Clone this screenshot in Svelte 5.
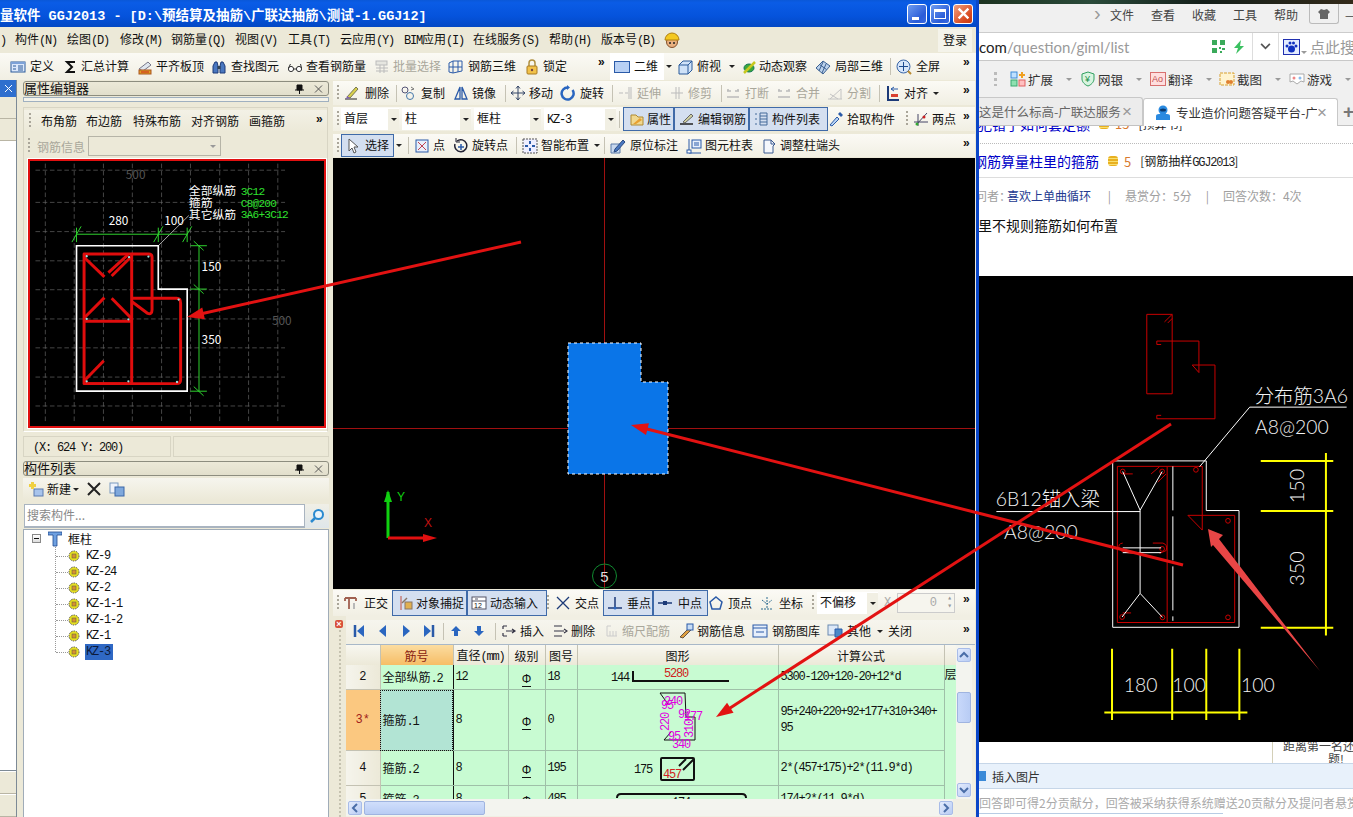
<script>
  // 工具栏用页面 x 坐标写数据，宽度由下一项推出
  const I = (x, i, tx, t, f = '', ix = x) => ({ x, i, tx, t, f, ix });
  const M = (x, k, t = '') => ({ x, k, t });

  function lay(origin, end, items) {
    const out = items.map((it, n) => ({ ...it, w: (n + 1 < items.length ? items[n + 1].x : end) - it.x }));
    return { lead: items[0].x - origin, items: out };
  }

  function runs(s) {
    return (s.match(/[\x20-\x7e]+|[^\x20-\x7e]+/g) || []).map((p) => ({ p, latin: /^[\x20-\x7e]/.test(p) }));
  }

  const menu = lay(0, 976, [
    [0, ')'], [15, '构件(N)'], [67, '绘图(D)'], [120, '修改(M)'], [171, '钢筋量(Q)'], [235, '视图(V)'], [288, '工具(T)'],
    [340, '云应用(Y)'], [404, 'BIM应用(I)'], [473, '在线服务(S)'], [549, '帮助(H)'], [601, '版本号(B)']
  ].map(([x, t]) => M(x, 'text', t)));

  const top1 = lay(0, 976, [
    I(10, 'def', 30, '定义'), I(63, 'sigma', 81, '汇总计算'), I(137, 'level', 156, '平齐板顶'), I(211, 'binoc', 231, '查找图元'),
    I(287, 'glass', 306, '查看钢筋量'), I(374, 'batch', 393, '批量选择', 'off'), I(448, 'r3d', 468, '钢筋三维'), I(524, 'lock', 543, '锁定'),
    M(597, 'more'), M(610, 'combo2', '二维'), M(664, 'drop'), I(677, 'cube', 697, '俯视'), M(727, 'drop'), I(741, 'orbit', 759, '动态观察'),
    I(815, 'local', 835, '局部三维'), M(890, 'sep'), I(896, 'zoom', 916, '全屏'), M(962, 'more')
  ]);

  const rowA = lay(333, 975, [
    M(337, 'grip'), I(343, 'erase', 365, '删除'), M(396, 'sep'), I(400, 'copy', 421, '复制'), I(453, 'mirror', 472, '镜像'), M(505, 'sep'),
    I(510, 'move', 529, '移动'), I(560, 'rotate', 580, '旋转'), M(612, 'sep'), I(618, 'extend', 637, '延伸', 'off'), I(669, 'trim', 688, '修剪', 'off'),
    M(721, 'sep'), I(725, 'brk', 745, '打断', 'off'), I(776, 'brk', 796, '合并', 'off'), I(827, 'split', 847, '分割', 'off'), M(879, 'sep'),
    I(885, 'align', 904, '对齐'), M(931, 'drop'), M(962, 'more')
  ]);

  const rowB = lay(333, 975, [
    M(337, 'grip'), M(341, 'combo', '首层'), M(402, 'combo', '柱'), M(474, 'combo', '框柱'), M(544, 'combo', 'KZ-3'), M(619, 'sep'),
    I(623, 'attr', 646, '属性', 'on', 628), I(674, 'edit', 697, '编辑钢筋', 'on', 678), I(749, 'list', 771, '构件列表', 'on', 752),
    I(828, 'pick', 847, '拾取构件'), M(906, 'grip'), I(913, 'two', 932, '两点'), M(962, 'more')
  ]);

  const rowC = lay(333, 975, [
    M(337, 'grip'), I(341, 'arrow', 364, '选择', 'on', 345), M(394, 'drop'), M(408, 'sep'), I(414, 'pt', 433, '点'), I(452, 'rotpt', 472, '旋转点'),
    M(516, 'sep'), I(522, 'smart', 541, '智能布置'), M(592, 'drop'), M(604, 'sep'), I(610, 'mark', 630, '原位标注'), I(686, 'tbl', 705, '图元柱表'),
    I(762, 'head', 780, '调整柱端头'), M(962, 'more')
  ]);

  const rowD = lay(333, 975, [
    M(337, 'grip'), I(343, 'ortho', 364, '正交'), I(392, 'snap', 415, '对象捕捉', 'on', 397), I(467, 'dyn', 489, '动态输入', 'on', 470), M(547, 'grip'),
    I(555, 'cross', 575, '交点'), I(603, 'perp', 626, '垂点', 'on', 606), I(653, 'mid', 677, '中点', 'on', 656), I(708, 'vert', 728, '顶点'),
    I(759, 'coord', 779, '坐标'), M(812, 'grip'), M(817, 'combo', '不偏移'), M(881, 'xlab'), M(897, 'spin'), M(962, 'more')
  ]);

  const rowE = lay(346, 975, [
    I(351, 'first', 0, ''), I(375, 'prev', 0, ''), I(398, 'next', 0, ''), I(421, 'last', 0, ''), M(443, 'sep'), I(448, 'up', 0, ''), I(471, 'down', 0, ''), M(495, 'sep'),
    I(501, 'ins', 520, '插入'), I(552, 'del', 571, '删除'), I(604, 'scale', 622, '缩尺配筋', 'off'), I(678, 'info', 697, '钢筋信息'), I(752, 'lib', 772, '钢筋图库'),
    I(827, 'other', 847, '其他'), M(875, 'drop'), M(888, 'text', '关闭'), M(962, 'more')
  ]);

  const bar1 = lay(23, 328, [
    M(28, 'grip'), M(40, 'text', '布角筋'), M(85, 'text', '布边筋'), M(132, 'text', '特殊布筋'), M(190, 'text', '对齐钢筋'), M(248, 'text', '画箍筋'), M(314, 'more')
  ]);

  const s = 'stroke', blue = '#2a5aa8';
  const icons = {
    def: `<rect x="1" y="3" width="14" height="10" fill="#dce8fb" ${s}="#2a5a9a"/><rect x="1" y="3" width="14" height="2" fill="#7da2d8"/><path d="M3 7h3M3 10h3M8 7h5M8 9h5M8 11h5" ${s}="#2a5a9a"/>`,
    sigma: `<path d="M12 3H4l5 5-5 5h8" fill="none" ${s}="#111" stroke-width="2"/>`,
    level: `<path d="M2 10l9-7 3 3-8 6z" fill="#dfe6ee" ${s}="#778"/><rect x="2" y="11" width="12" height="4" fill="#e0a020" ${s}="#a52"/><path d="M4 13h8" ${s}="#c22"/>`,
    binoc: `<path d="M2 14V7l2-4h2l1 4v7zM9 14V7l1-4h2l2 4v7z" fill="#4a78c0" ${s}="#1c3a78"/><rect x="6.5" y="7" width="3" height="3" fill="#345"/>`,
    glass: `<circle cx="4" cy="10" r="2.6" fill="#fff" ${s}="#333"/><circle cx="12" cy="10" r="2.6" fill="#fff" ${s}="#333"/><path d="M6.5 10h3M1.5 9l2-4M14.500 9l-1-4" ${s}="#333" fill="none"/>`,
    batch: `<rect x="2" y="2" width="11" height="4" fill="#e6e6e0" ${s}="#bbb"/><path d="M2 9h12M2 12h12M6 6v8M10 6v8" ${s}="#bbb"/>`,
    r3d: `<path d="M1 4l4-2v12l-4-1zM5 2h9v10l-9 2M10 2v11M1 8h13" fill="none" ${s}="${blue}"/>`,
    lock: `<path d="M5 7V4a3 3 0 016 0v3" fill="none" ${s}="#b09040" stroke-width="1.500"/><rect x="3" y="7" width="10" height="8" rx="1" fill="#f2c24a" ${s}="#a87a20"/><circle cx="8" cy="11" r="1.200" fill="#744"/>`,
    cube: `<path d="M2 6l4-4h9v9l-4 4H2z" fill="#cfe2f8" ${s}="#2a5a9a"/><path d="M2 6h9v9M11 6l4-4" fill="none" ${s}="#2a5a9a"/>`,
    orbit: `<ellipse cx="8" cy="9" rx="5" ry="4" fill="#3da83a" ${s}="#175"/><path d="M3 14L14 3" ${s}="#c8c820" stroke-width="2.500"/>`,
    local: `<path d="M1 9l7-7 7 5-7 8z" fill="#bcd2ec" ${s}="#3a5f90"/><path d="M4.500 5.500l7 5M8 3l-4 9M11 5l-4 9" ${s}="#3a5f90"/>`,
    zoom: `<circle cx="7.500" cy="7.500" r="6.500" fill="#d7e6fa" ${s}="#3a66a8"/><path d="M7.500 3v9M3 7.500h9" ${s}="#1c4a90"/><path d="M12 12l3 3" ${s}="#b98a30" stroke-width="2"/>`,
    erase: `<path d="M2 14h12" ${s}="#222"/><path d="M4 12L13 2l2 2-8 9z" fill="#d8d04a" ${s}="#775"/><path d="M3 14l1-3 3 2z" fill="#8060b0"/>`,
    copy: `<circle cx="5" cy="5" r="3" fill="none" ${s}="#557"/><circle cx="10" cy="11" r="3.500" fill="none" ${s}="#47a"/><path d="M11 2l3 2-3 1" fill="none" ${s}="#777"/>`,
    mirror: `<path d="M7 2L2 14h5zM9 2l5 12H9z" fill="none" ${s}="#2a5aa8" stroke-width="1.300"/>`,
    move: `<path d="M8 1v14M1 8h14M8 1L6 3.500M8 1l2 2.500M8 15l-2-2.500M8 15l2-2.500M1 8l2.500-2M1 8l2.500 2M15 8l-2.500-2M15 8l-2.500 2" fill="none" ${s}="#346"/>`,
    rotate: `<path d="M12.500 5A6 6 0 118 2.500" fill="none" ${s}="#2a66c0" stroke-width="2.500"/><path d="M7 0l3 2.500L7 5z" fill="#2a66c0"/>`,
    extend: `<path d="M1 8h4M7 8h3M13 2v12M11 2v12" fill="none" ${s}="#bbb"/>`,
    trim: `<path d="M2 8h12M7 2v12M10 2v12" fill="none" ${s}="#bbb"/>`,
    brk: `<path d="M2 6h4M10 6h4M2 12h12M3 4v2M13 4v2" fill="none" ${s}="#bbb" stroke-width="1.500"/>`,
    split: `<path d="M1 14h14M3 14L14 4M3 9l8 5M14 4v10" fill="none" ${s}="#c4c4c4"/>`,
    align: `<path d="M3 1v14h11" fill="none" ${s}="#1c3a78" stroke-width="2"/><rect x="6" y="9" width="7" height="3" fill="#d84030"/><path d="M13 4H6M9 2L6 4l3 2" fill="none" ${s}="#2a5aa8"/>`,
    attr: `<path d="M2 4h5l2 2h5v8H2z" fill="#f0d890" ${s}="#b08a30"/><path d="M4 13l7-6 2 2-6 4z" fill="#e8a030"/>`,
    edit: `<path d="M1 13h13" ${s}="#222" stroke-width="1.500"/><path d="M4 11l8-8 2 2-8 7z" fill="#d0d0a0" ${s}="#666"/>`,
    list: `<path d="M2 3h2M2 8h2M2 13h2M7 2h7v12H7zM7 5h7M7 8h7M7 11h7" fill="none" ${s}="#446a9a"/>`,
    pick: `<path d="M2 14l7-8 2 2-7 7z" fill="#b8d4f4" ${s}="#2a5aa8"/><path d="M10 3l3 3 2-2-3-3z" fill="#2a5aa8"/>`,
    two: `<path d="M1 11h14M3 14L14 2M5 3v12" fill="none" ${s}="#446"/><circle cx="11" cy="6" r="1.500" fill="#c22"/><circle cx="4" cy="13" r="1.500" fill="#3a3"/>`,
    arrow: `<path d="M3 1v12l3-3 2 5 2-1-2-5h4z" fill="#fff" ${s}="#555"/>`,
    pt: `<rect x="2" y="2" width="12" height="12" fill="#e8eefa" ${s}="#2a5aa8"/><path d="M4 4l8 8M12 4l-8 8" ${s}="#c04050"/>`,
    rotpt: `<path d="M3 6a6 6 0 102-3" fill="none" ${s}="#223" stroke-width="1.500"/><path d="M4 0v4h4" fill="none" ${s}="#223"/><path d="M9 6v6M6 9h6" ${s}="#2a5aa8" stroke-width="1.500"/>`,
    smart: `<rect x="1" y="1" width="14" height="14" fill="#eef" ${s}="#555" stroke-dasharray="2 1"/><path d="M8 3v3M8 10v3M3 8h3M10 8h3" ${s}="#2a5aa8" stroke-width="2"/>`,
    mark: `<path d="M1 6h9v9H1z" fill="#c8d8ee" ${s}="#5a7aa8"/><path d="M5 11L13 2l2 2-8 9-3 1z" fill="#4a78c0" ${s}="#2a4a80"/>`,
    tbl: `<path d="M3 1v14h12" fill="none" ${s}="#2a5aa8"/><rect x="6" y="2" width="9" height="8" fill="#e8f0fc" ${s}="#2a5aa8"/><path d="M8 5h5M8 7h5" ${s}="#2a5aa8"/><rect x="1" y="12" width="4" height="3" fill="#fff" ${s}="#2a5aa8"/>`,
    head: `<path d="M2 2h7l4 4-2 2v7H2z" fill="#f4f7fc" ${s}="#3a5a90"/><path d="M9 2v4h4" fill="none" ${s}="#3a5a90"/>`,
    ortho: `<path d="M2 3h11M6 3v11M2 3v3M13 3v3" fill="none" ${s}="#a06050" stroke-width="1.800"/><path d="M11 8v6" ${s}="#b8b8b8" stroke-width="2"/>`,
    snap: `<path d="M3 1v14" ${s}="#c05040"/><rect x="7" y="7" width="7" height="7" fill="#e0b050" ${s}="#876"/><path d="M4 8l5-5" ${s}="#876" stroke-width="1.500"/>`,
    dyn: `<rect x="1" y="2" width="14" height="12" fill="#fff" ${s}="#556"/><path d="M1 6h14M4 4h3" ${s}="#556"/><text x="3" y="13" font-size="7" font-family="Liberation Sans" fill="#111">12</text>`,
    cross: `<path d="M2 2l12 12M14 2L2 14" ${s}="#1c3a78" stroke-width="1.300"/>`,
    perp: `<path d="M1 13h14M8 2v11" ${s}="#1c3a78" stroke-width="1.500"/><circle cx="8" cy="13" r="1.500" fill="#2a66c0"/>`,
    mid: `<path d="M1 8h14" ${s}="#1c3a78" stroke-width="1.500"/><rect x="6" y="6" width="4" height="4" fill="#1c3a78"/>`,
    vert: `<path d="M8 2l6 5-2 7H4L2 7z" fill="none" ${s}="#2a5aa8" stroke-width="1.500"/>`,
    coord: `<path d="M8 2v12M2 14h12M3 5l5 4 5-4" fill="none" ${s}="#2a6a90" stroke-dasharray="2 1"/>`,
    first: `<path d="M4 2v12" ${s}="#2a5aa8" stroke-width="2.500"/><path d="M13 2v12L6 8z" fill="#2a66c0"/>`,
    prev: `<path d="M11 2v12L4 8z" fill="#2a66c0"/>`,
    next: `<path d="M5 2v12l7-6z" fill="#2a66c0"/>`,
    last: `<path d="M12 2v12" ${s}="#2a5aa8" stroke-width="2.500"/><path d="M3 2v12l7-6z" fill="#2a66c0"/>`,
    up: `<path d="M8 3l5 5h-3v5H6V8H3z" fill="#2a66c0"/>`,
    down: `<path d="M8 13l5-5h-3V3H6v5H3z" fill="#2a66c0"/>`,
    ins: `<path d="M2 3h4M2 13h4M2 3v3M2 10v3M5 8h9M11 6l3 2-3 2" fill="none" ${s}="#334" stroke-width="1.200"/>`,
    del: `<path d="M2 3h8M2 8h10M2 13h8M12 6l3 2-3 2" fill="none" ${s}="#334" stroke-width="1.200"/>`,
    scale: `<path d="M3 3h4M3 3v10h10" fill="none" ${s}="#ccc"/><path d="M6 13v-5M9 13v-5M12 13v-5" ${s}="#ccc"/>`,
    info: `<path d="M2 14L11 5l2 2-8 8z" fill="#e0a040" ${s}="#654"/><rect x="9" y="1" width="6" height="6" fill="#c8dcf4" ${s}="#2a5aa8"/>`,
    lib: `<rect x="1" y="2" width="14" height="12" fill="#e6effb" ${s}="#2a5aa8"/><path d="M1 5h14M4 9h8" ${s}="#2a5aa8"/>`,
    other: `<rect x="1" y="2" width="10" height="10" fill="#dce8f8" ${s}="#6a8ab0"/><path d="M8 6h7v8H8z" fill="#4a88c8" ${s}="#2a5aa8"/>`
  };

  const gridX = [70, 158, 247, 335, 424, 512, 601, 689, 778];
  const gridY = [40, 138, 227, 316, 404, 493, 581, 670, 758];
  const rebar = [
    'M188,295 H333 V690 H188 Z',
    'M333,295 H385 Q395,295 395,305 V465 Q395,482 380,475 L333,440',
    'M333,430 H470 Q482,430 482,445 V678 Q482,690 470,690 H188',
    'M188,500 H333',
    'M188,305 L250,365', 'M188,490 L250,428', 'M272,362 L330,305', 'M262,352 L322,297', 'M272,430 L333,492', 'M188,682 L248,620'
  ];
  const dots = [[196, 302], [325, 305], [384, 303], [476, 434], [196, 493], [323, 494], [196, 683], [323, 683], [471, 685]];
  const greenTicks = [[165, 235], [414, 235], [502, 235]];
  const greenH = [270, 402, 713];

  const tree = ['KZ-9', 'KZ-24', 'KZ-2', 'KZ-1-1', 'KZ-1-2', 'KZ-1', 'KZ-3'];

  const cols = [34, 73, 55, 37, 32, 201, 166, 12];
  const heads = ['', '筋号', '直径(mm)', '级别', '图号', '图形', '计算公式', ''];
  const rows = [
    { n: '2', name: '全部纵筋.2', d: '12', no: '18', f: '5300-120+120-20+12*d', h: 24, extra: '层', shape: 'a' },
    { n: '3*', name: '箍筋.1', d: '8', no: '0', f: '95+240+220+92+177+310+340+ 95', h: 60, sel: true, shape: 'b' },
    { n: '4', name: '箍筋.2', d: '8', no: '195', f: '2*(457+175)+2*(11.9*d)', h: 34, shape: 'c' },
    { n: '5', name: '箍筋.3', d: '8', no: '485', f: '174+2*(11.9*d)', h: 26, shape: 'd' }
  ];

  const bTools = [
    { x: 1010, tx: 1027, t: '扩展', i: 'ext', dx: 1065 },
    { x: 1080, tx: 1098, t: '网银', i: 'bank', dx: 1135 },
    { x: 1150, tx: 1168, t: '翻译', i: 'trans', dx: 1205 },
    { x: 1219, tx: 1238, t: '截图', i: 'shot', dx: 1275 },
    { x: 1289, tx: 1307, t: '游戏', i: 'game', dx: 1345 }
  ];
  const bIcons = {
    ext: '<rect x="1" y="1" width="6" height="6" fill="#bfe0ff" stroke="#3a8ad8"/><rect x="1" y="9" width="6" height="6" fill="#8fe0b0" stroke="#3aa870"/><rect x="9" y="9" width="6" height="6" fill="#ffc0c0" stroke="#e06060"/><path d="M12 1v6M9 4h6" stroke="#f0a020" stroke-width="2"/>',
    bank: '<path d="M8 1l6 2v5c0 3-3 6-6 7-3-1-6-4-6-7V3z" fill="#d8f4e0" stroke="#30a060"/><text x="5" y="11" font-size="9" font-family="Liberation Sans" fill="#20904a">¥</text>',
    trans: '<rect x="0.500" y="1.500" width="15" height="13" fill="#ffdede" stroke="#d87070"/><text x="2" y="11" font-size="9" font-family="Liberation Sans" fill="#c05050">Ao</text>',
    shot: '<rect x="1" y="2" width="14" height="12" fill="#fff4d0" stroke="#d8a030" stroke-dasharray="3 1"/><circle cx="9" cy="11" r="2" fill="#e08030"/><circle cx="12" cy="11" r="2" fill="#e08030"/>',
    game: '<path d="M1 3h14v8l-3-1-4 3-4-3-3 1z" fill="#fff" stroke="#aaa"/><circle cx="5" cy="7" r="1.500" fill="#e88"/><circle cx="11" cy="7" r="1.500" fill="#8be"/>'
  };

  // 箭头头部：按方向算三角形
  function head(x1, y1, x2, y2, len, wid) {
    const d = Math.hypot(x2 - x1, y2 - y1);
    const ux = (x2 - x1) / d, uy = (y2 - y1) / d;
    const bx = x2 - ux * len, by = y2 - uy * len;
    return `${x2},${y2} ${bx - uy * wid},${by + ux * wid} ${bx + uy * wid},${by - ux * wid}`;
  }
  const arrows = [
    [521, 242, 187, 317],
    [1183, 565, 631, 425],
    [1171, 424, 716, 717]
  ];
</script>

{#snippet txt(str)}
  {#each runs(str) as r}<span class:m={r.latin}>{r.p}</span>{/each}
{/snippet}

{#snippet icon(name)}
  <svg class="ic" viewBox="0 0 16 16">{@html icons[name]}</svg>
{/snippet}

{#snippet bar(row, cls)}
  <div class="tb {cls}">
    {#if row.lead > 0}<div class="sp" style="width:{row.lead}px"></div>{/if}
    {#each row.items as it}
      {#if it.k === 'grip'}
        <div class="it" style="width:{it.w}px"><i class="grip"></i></div>
      {:else if it.k === 'sep'}
        <div class="it" style="width:{it.w}px"><i class="sep"></i></div>
      {:else if it.k === 'more'}
        <div class="it more" style="width:{it.w}px">»</div>
      {:else if it.k === 'drop'}
        <div class="it" style="width:{it.w}px"><i class="tri"></i></div>
      {:else if it.k === 'text'}
        <div class="it" style="width:{it.w}px">{@render txt(it.t)}</div>
      {:else if it.k === 'combo'}
        <div class="it" style="width:{it.w}px">
          <div class="combo">{@render txt(it.t)}<b class="cbtn"><i class="tri"></i></b></div>
        </div>
      {:else if it.k === 'combo2'}
        <div class="it two-d" style="width:{it.w}px">
          <svg class="ic wide" viewBox="0 0 16 12"><rect x="0.500" y="0.500" width="15" height="11" fill="#b8d0f4" stroke="#2a5aa8" /></svg>
          <span class="lab">{it.t}</span>
        </div>
      {:else if it.k === 'xlab'}
        <div class="it xlab" style="width:{it.w}px">X</div>
      {:else if it.k === 'spin'}
        <div class="it" style="width:{it.w}px"><div class="spin">0<b>▴<br />▾</b></div></div>
      {:else}
        <div class="it" class:off={it.f === 'off'} class:on={it.f === 'on'} style="width:{it.w}px">
          <span class="pad" style="width:{it.ix - it.x}px"></span>
          {@render icon(it.i)}
          {#if it.t}<span class="pad" style="width:{it.tx - it.ix - 16}px"></span><span class="lab">{it.t}</span>{/if}
        </div>
      {/if}
    {/each}
  </div>
{/snippet}

{#snippet paneHead(title)}
  <div class="phead">
    <span>{title}</span>
    <svg class="pin" viewBox="0 0 9 10"><path d="M2 1h5v5H2zM0 6h9M4.500 6v4" fill="#111" stroke="#111" /></svg>
    <svg class="pin" viewBox="0 0 9 9"><path d="M1 1l7 7M8 1L1 8" stroke="#555" /></svg>
  </div>
{/snippet}

<div class="app">
  <div class="win">
    <div class="title">
      <span class="ttl">量软件 GGJ2013 - [D:\预结算及抽筋\广联达抽筋\测试-1.GGJ12]</span>
      <div class="wbtns">
        <div class="wb"><i class="wmin"></i></div>
        <div class="wb"><i class="wmax"></i></div>
        <div class="wb close">
          <svg viewBox="0 0 12 12" width="13" height="13"><path d="M1.500 1.500l9 9M10.500 1.500l-9 9" stroke="#fff" stroke-width="2.200" /></svg>
        </div>
      </div>
    </div>

    <div class="menu">
      {#each menu.items as it}
        <div class="mi" style="width:{it.w}px">{@render txt(it.t)}</div>
      {/each}
      <svg class="helmet" viewBox="0 0 16 16">
        <circle cx="8" cy="10" r="5.500" fill="#e8b080" stroke="#85502a" />
        <path d="M1 8a7 7 0 0114 0z" fill="#f4c820" stroke="#b08010" />
        <circle cx="6" cy="11" r="1" fill="#222" /><circle cx="10" cy="11" r="1" fill="#222" />
      </svg>
      <div class="login">登录</div>
    </div>

    {@render bar(top1, 'top1')}

    <div class="body">
      <div class="strip">
        <div class="shead">
          <svg viewBox="0 0 9 9" width="9" height="9"><path d="M1 1l7 7M8 1L1 8" stroke="#fff" /></svg>
        </div>
        <div class="scell"></div>
        <div class="scell"></div>
        <div class="swhite"></div>
        <div class="scell low"></div>
        <div class="scell low"></div>
      </div>

      <div class="left">
        {@render paneHead('属性编辑器')}
        <div class="thinbar"></div>
        <div class="group">
          {@render bar(bar1, 'inner')}
          <div class="inforow">
            <i class="grip"></i>
            <span class="dis">钢筋信息</span>
            <div class="discombo"><i class="tri gray"></i></div>
          </div>
          <svg class="sect" viewBox="24 12 894 807">
            {#each gridX as x}
              <line x1={x} y1="20" x2={x} y2="810" stroke="#6a6a6a" stroke-width="2" stroke-dasharray="14 8" />
            {/each}
            {#each gridY as y}
              <line x1="40" y1={y} x2="800" y2={y} stroke="#6a6a6a" stroke-width="2" stroke-dasharray="14 8" />
            {/each}
            <text class="ct dim" x="315" y="68">500</text>
            <text class="ct dim" x="760" y="512">500</text>

            <path d="M165,270 H414 V402 H502 V713 H165 Z" fill="none" stroke="#fff" stroke-width="5" />
            <line x1="414" y1="270" x2="507" y2="178" stroke="#fff" stroke-width="2" />

            <path d="M165,235 H502 M538,270 V713" stroke="#2fd32f" stroke-width="3" fill="none" />
            {#each greenTicks as [x, y]}
              <path d="M{x - 14},{y + 24} L{x + 14},{y - 24} M{x},{y - 20} V{y + 24}" stroke="#2fd32f" stroke-width="3" />
            {/each}
            {#each greenH as y}
              <path d="M512,{y} H562 M522,{y - 14} L552,{y + 14}" stroke="#2fd32f" stroke-width="3" />
            {/each}

            {#each rebar as d}
              <path {d} fill="none" stroke="#e00d0d" stroke-width="9" stroke-linejoin="round" />
            {/each}
            {#each dots as [x, y]}
              <circle cx={x} cy={y} r="3.500" fill="#9fe0e0" />
            {/each}

            <text class="ct" x="263" y="208">280</text>
            <text class="ct" x="432" y="208">100</text>
            <text class="ct" x="546" y="347">150</text>
            <text class="ct" x="546" y="569">350</text>
            <text class="ct" x="507" y="116">全部纵筋</text>
            <text class="ct" x="507" y="152">箍筋</text>
            <text class="ct" x="507" y="188">其它纵筋</text>
            <text class="ct grn" x="665" y="115">3C12</text>
            <text class="ct grn" x="665" y="151">C8@200</text>
            <text class="ct grn" x="665" y="187">3A6+3C12</text>
          </svg>
        </div>
        <div class="status">
          <div class="cell a">{@render txt('(X: 624 Y: 200)')}</div>
          <div class="cell b"></div>
        </div>
        {@render paneHead('构件列表')}
        <div class="newbar">
          <svg class="ic" viewBox="0 0 16 16">
            <rect x="6" y="8" width="9" height="7" fill="#a8c4ec" stroke="#5a7ab0" />
            <path d="M4.500 1v7M1 4.500h7" stroke="#f0d040" stroke-width="3" />
          </svg>
          <span class="new">新建</span>
          <i class="tri"></i>
          <svg class="xx" viewBox="0 0 14 14"><path d="M1 1l12 12M13 1L1 13" stroke="#222" stroke-width="2" /></svg>
          <svg class="ic" viewBox="0 0 16 16">
            <rect x="1" y="2" width="8" height="10" fill="#eef3fb" stroke="#7a9ac0" />
            <rect x="6" y="6" width="9" height="9" fill="#7fa8dc" stroke="#3a66a8" />
          </svg>
        </div>
        <div class="search">
          <div class="sinput">搜索构件...</div>
          <div class="sbtn">
            <svg viewBox="0 0 16 16" width="16" height="16">
              <circle cx="9.500" cy="6.500" r="4.500" fill="#eaf4fb" stroke="#2a8ad0" stroke-width="2" />
              <path d="M6 10l-4 4" stroke="#2a8ad0" stroke-width="2.500" />
            </svg>
          </div>
        </div>
        <div class="tree">
          <div class="troot">
            <span class="minus"></span>
            <svg class="funnel" viewBox="0 0 14 16">
              <path d="M0 1h14v3H9v11H5V4H0z" fill="#6fa0e0" stroke="#204a90" stroke-width="0.800" />
            </svg>
            <span>框柱</span>
          </div>
          <div class="tlist">
            {#each tree as t, n}
              <div class="tnode">
                <svg class="gear" viewBox="0 0 12 12">
                  <circle cx="6" cy="6" r="5" fill="#e8e020" stroke="#555" stroke-dasharray="1.500 1" />
                  <rect x="4" y="4" width="4" height="4" fill="#d89030" stroke="#664" stroke-width="0.600" />
                </svg>
                <span class="m tname" class:cur={n === tree.length - 1}>{t}</span>
              </div>
            {/each}
          </div>
        </div>
      </div>

      <div class="main">
        {@render bar(rowA, 'ra')}
        {@render bar(rowB, 'rb')}
        {@render bar(rowC, 'rc')}
        <svg class="canvas" viewBox="333 158 642 431">
          <line x1="604.500" y1="158" x2="604.500" y2="589" stroke="#a01010" />
          <line x1="333" y1="428.500" x2="975" y2="428.500" stroke="#a01010" />
          <path d="M568,343 H641 V382 H668 V474 H568 Z" fill="#0a75e8" stroke="#fff" stroke-dasharray="3 3" />
          <path d="M388,538 V492" stroke="#10d010" stroke-width="3" />
          <path d="M388,490 l-4,12 h8 z" fill="#10d010" />
          <path d="M388,538 H425" stroke="#e01010" stroke-width="3" />
          <path d="M437,538 l-14,-4 v8 z" fill="#e01010" />
          <text class="axis y" x="397" y="501">Y</text>
          <text class="axis x" x="424" y="527">X</text>
          <circle cx="604.500" cy="576" r="12" fill="none" stroke="#108a30" />
          <text class="five" x="604.500" y="582">5</text>
        </svg>
        {@render bar(rowD, 'rd')}

        <div class="lower">
          <div class="gutter">
            <div class="redx">×</div>
            <i class="dotline"></i>
          </div>
          <div class="lowerbody">
            {@render bar(rowE, 're')}
            <div class="gridwrap">
              <div class="gridclip">
                <table>
                  <colgroup>
                    {#each cols as c}<col style="width:{c}px" />{/each}
                  </colgroup>
                  <thead>
                    <tr>
                      {#each heads as h, n}
                        <th class:hot={n === 1}>{@render txt(h)}</th>
                      {/each}
                    </tr>
                  </thead>
                  <tbody>
                    {#each rows as r}
                      <tr style="height:{r.h}px">
                        <td class="num" class:cursel={r.sel}>{r.n}</td>
                        <td class="nm" class:focus={r.sel}>{@render txt(r.name)}</td>
                        <td class="m">{r.d}</td>
                        <td class="ctr"><span class="hrb">Φ</span></td>
                        <td class="m">{r.no}</td>
                        <td class="shape">
                          {#if r.shape === 'a'}
                            <svg viewBox="0 0 201 24" width="201" height="24">
                              <text class="sn" x="33" y="16">144</text>
                              <path d="M55,6 V16 H151" fill="none" stroke="#111" stroke-width="2" />
                              <text class="sn red" x="86" y="12">5280</text>
                            </svg>
                          {:else if r.shape === 'b'}
                            <svg viewBox="0 0 201 60" width="201" height="60">
                              <path d="M82,3 H107 L108,27 H117 V50 H86 M82,3 L90,14 M86,50 L93,42" fill="none" stroke="#111" />
                              <text class="sn mg" x="86" y="15">240</text>
                              <text class="sn mg" x="83" y="19">95</text>
                              <text class="sn mg" transform="translate(91,41) rotate(-90)">220</text>
                              <text class="sn mg" x="100" y="28">92</text>
                              <text class="sn mg" x="106" y="30">177</text>
                              <text class="sn mg" transform="translate(115,48) rotate(-90)">310</text>
                              <text class="sn mg" x="90" y="50">95</text>
                              <text class="sn mg" x="94" y="58">340</text>
                            </svg>
                          {:else if r.shape === 'c'}
                            <svg viewBox="0 0 201 34" width="201" height="34">
                              <text class="sn" x="56" y="22">175</text>
                              <rect x="83" y="7" width="33" height="22" rx="1" fill="none" stroke="#111" stroke-width="2" />
                              <path d="M116,8 L105,19 M108,8 L101,15" stroke="#111" stroke-width="2" />
                              <text class="sn red" x="85" y="27">457</text>
                            </svg>
                          {:else}
                            <svg viewBox="0 0 201 26" width="201" height="26">
                              <path d="M39,12 Q39,8 43,8 H164 Q168,8 168,12" fill="none" stroke="#111" stroke-width="2" />
                              <text class="sn" x="94" y="20">174</text>
                            </svg>
                          {/if}
                        </td>
                        <td class="m fx">{r.f}</td>
                        <td class="ex">{r.extra || ''}</td>
                      </tr>
                    {/each}
                  </tbody>
                </table>
              </div>
              <div class="vscroll">
                <div class="sb"><svg viewBox="0 0 10 8" width="10" height="8"><path d="M1 6l4-4 4 4" fill="none" stroke="#4a6ea8" stroke-width="2" /></svg></div>
                <div class="vthumb"></div>
                <div class="sb"><svg viewBox="0 0 10 8" width="10" height="8"><path d="M1 2l4 4 4-4" fill="none" stroke="#4a6ea8" stroke-width="2" /></svg></div>
              </div>
            </div>
            <div class="hscroll">
              <div class="sb"><svg viewBox="0 0 8 10" width="8" height="10"><path d="M6 1L2 5l4 4" fill="none" stroke="#4a6ea8" stroke-width="2" /></svg></div>
              <div class="hthumb"></div>
              <div class="sb"><svg viewBox="0 0 8 10" width="8" height="10"><path d="M2 1l4 4-4 4" fill="none" stroke="#4a6ea8" stroke-width="2" /></svg></div>
            </div>
          </div>
        </div>
      </div>
    </div>
  </div>

  <div class="edge"></div>

  <div class="browser">
    <div class="photo"></div>
    <div class="bmenu">
      <span class="chev">›</span>
      <span>文件</span><span>查看</span><span>收藏</span><span>工具</span><span>帮助</span>
      <div class="skin">
        <svg viewBox="0 0 12 12" width="12" height="12"><path d="M3 1l3 1 3-1 3 3-2 2v5H2V6L0 4z" fill="#666" /></svg>
      </div>
      <span class="dash">—</span>
    </div>
    <div class="addr">
      <span class="url">com<em>/question/giml/list</em></span>
      <svg class="qr" viewBox="0 0 13 13">
        <path d="M0 0h5v5H0zM8 0h5v5H8zM0 8h5v5H0zM7 7h2v2H7zM10 8h3v2h-3zM8 11h2v2H8z" fill="#3aaa5a" />
      </svg>
      <svg class="bolt" viewBox="0 0 12 14"><path d="M8 0L1 8h4l-2 6 8-8H7z" fill="#3ac060" /></svg>
      <i class="vsep"></i>
      <svg class="vee" viewBox="0 0 12 8"><path d="M1 1l5 5 5-5" fill="none" stroke="#555" stroke-width="2" /></svg>
      <i class="vsep"></i>
      <svg class="paw" viewBox="0 0 17 16">
        <rect x="0.500" y="0.500" width="16" height="15" fill="#e4ecff" stroke="#2030b0" />
        <circle cx="8.500" cy="10" r="3.500" fill="#1030c0" />
        <circle cx="4" cy="7" r="1.500" fill="#1030c0" /><circle cx="7" cy="4" r="1.500" fill="#1030c0" />
        <circle cx="10.500" cy="4" r="1.500" fill="#1030c0" /><circle cx="13" cy="7" r="1.500" fill="#1030c0" />
      </svg>
      <i class="tri gray pawtri"></i>
      <span class="hint">点此搜</span>
    </div>
    <div class="btools">
      <i class="bgrip"></i>
      {#each bTools as b, n}
        <div class="bt" style="width:{(n + 1 < bTools.length ? bTools[n + 1].x : 1353) - b.x}px">
          <svg class="ic" viewBox="0 0 16 16">{@html bIcons[b.i]}</svg>
          <span class="btl">{b.t}</span>
          <i class="tri gray"></i>
        </div>
      {/each}
    </div>
    <div class="tabs">
      <div class="tab">
        <span class="tabt">这是什么标高-广联达服务</span>
        <span class="tabx">×</span>
      </div>
      <div class="tab act">
        <svg class="ic" viewBox="0 0 16 16">
          <circle cx="8" cy="5" r="4.500" fill="#2a8ae0" />
          <path d="M1 15V11q0-2 3-2h8q3 0 3 2v4z" fill="#2a8ae0" />
          <ellipse cx="8" cy="5" rx="3" ry="1.500" fill="#0a3a70" />
        </svg>
        <span class="tabt dark">专业造价问题答疑平台-广</span>
        <span class="tabx">×</span>
      </div>
      <span class="plus">+</span>
    </div>
    <div class="content">
      <div class="cliprow">
        <span class="bluel">犯错了如何套定额</span>
        <i class="coin"></i>
        <span class="oj">15</span>
        <span class="tagl">[预算书]</span>
      </div>
      <div class="qrow">
        <span class="qt">钢筋算量柱里的箍筋</span>
        <i class="coin"></i>
        <span class="oj">5</span>
        <span class="tagl">[钢筋抽样{''}<span class="m">GGJ2013</span>]</span>
      </div>
      <div class="meta">
        问者：<span class="who">喜欢上单曲循环</span>
        <span class="bar">|</span>悬赏分：5分<span class="bar">|</span>回答次数：4次
      </div>
      <div class="qtext">里不规则箍筋如何布置</div>

      <svg class="cad" viewBox="0 -12 1119 1361" preserveAspectRatio="none">
        <g fill="none" stroke="#c80000">
          <rect x="502" y="100" width="76" height="232" />
          <path d="M555,122 L578,100 M565,125 L578,112" />
          <path d="M545,188 H532 V178 H658 V270 L638,248 H706 V405 H532 V395 H545" />
          <rect x="414" y="544" width="149" height="456" />
          <path d="M563,544 H668 V730 L625,687 H765 V1000 H563" />
          <path d="M430,566 H460 M515,566 L540,545 M535,590 L560,566 M430,972 H455" />
          <path d="M430,768 Q414,770 420,785 Q425,798 470,798 M520,768 H550 Q565,772 560,790 L540,798" />
          {#each [[430, 559], [548, 559], [649, 554], [745, 703], [428, 984], [549, 985], [745, 985], [548, 785]] as [cx, cy]}
            <circle {cx} {cy} r="7" />
          {/each}
        </g>
        <g fill="none" stroke="#fff">
          <path d="M400,528 H680 V673 H778 V1014 H400 Z" />
          <path d="M430,559 L482,672 L548,559 M482,672 V915 M482,915 L428,984 M482,915 L549,985" />
          <path d="M430,782 H545 M430,796 H545" />
          <path d="M580,544 V995" stroke-dasharray="44 6" />
          <path d="M52,676 H482 M1100,371 H810 L660,545" />
        </g>
        <g fill="none" stroke="#ffff00" stroke-width="2">
          <path d="M843,528 H1060 M843,674 H1060 M843,1015 H1060 M1038,505 V1038" />
          <path d="M398,1077 V1285 M578,1077 V1285 M680,1077 V1285 M779,1077 V1285 M375,1263 H803" />
        </g>
        <g class="cadt">
          <text x="825" y="360">分布筋3A6</text>
          <text x="826" y="450">A8@200</text>
          <text x="50" y="660">6B12锚入梁</text>
          <text x="75" y="755">A8@200</text>
          <text x="433" y="1202">180</text>
          <text x="578" y="1202">100</text>
          <text x="784" y="1202">100</text>
          <text transform="translate(973,652) rotate(-90)">150</text>
          <text transform="translate(973,893) rotate(-90)">350</text>
        </g>
      </svg>

      <div class="under">
        <div class="uleft"></div>
        <div class="uright">距离第一名还<br /><span>题</span>!</div>
      </div>
      <div class="insert">
        <i class="insic"></i>
        插入图片
      </div>
      <div class="tip">回答即可得2分贡献分，回答被采纳获得系统赠送20贡献分及提问者悬赏</div>
      <div class="tipline"></div>
    </div>
  </div>

  <svg class="overlay" viewBox="0 0 1353 817">
    {#each arrows as [x1, y1, x2, y2]}
      <line {x1} {y1} x2={x2 + (x1 - x2) * 0.02} y2={y2 + (y1 - y2) * 0.02} stroke="#e21212" stroke-width="3" />
      <polygon points={head(x1, y1, x2, y2, 17, 6)} fill="#e21212" />
    {/each}
    <polygon points="1208,529 1223,535 1219,539 1320,671 1213,545 1211,547" fill="#e84646" />
  </svg>
</div>

<style>
  :global(body) {
    margin: 0;
    background: #ece9d8;
  }
  .app {
    position: relative;
    display: flex;
    width: 1353px;
    height: 817px;
    overflow: hidden;
    font: 12px 'Noto Sans CJK SC', 'Liberation Sans', sans-serif;
    color: #111;
    background: #ece9d8;
  }
  .m {
    font-family: 'Liberation Mono', monospace;
    letter-spacing: -1.2px;
  }
  .win {
    width: 976px;
    flex: none;
    display: flex;
    flex-direction: column;
    height: 817px;
  }
  .edge {
    width: 3px;
    flex: none;
    background: #0a46c8;
  }

  /* 标题栏 */
  .title {
    height: 27px;
    flex: none;
    display: flex;
    align-items: center;
    justify-content: space-between;
    background: linear-gradient(#0a58d8, #0a5ce6 10%, #0553dc 60%, #0348c4);
  }
  .ttl {
    font: bold 13.500px 'Liberation Mono', 'Noto Sans CJK SC', monospace;
    color: #fff;
    white-space: nowrap;
  }
  .wbtns {
    display: flex;
    gap: 3px;
    margin-right: 3px;
  }
  .wb {
    width: 20px;
    height: 20px;
    box-sizing: border-box;
    border: 1px solid #fff;
    border-radius: 3px;
    background: linear-gradient(135deg, #6e9cf0, #2a5cd8 70%, #3a6ae0);
    position: relative;
    display: flex;
    align-items: center;
    justify-content: center;
  }
  .wb.close {
    background: linear-gradient(135deg, #f0a080, #d84a20 70%, #c83810);
  }
  .wmin {
    position: absolute;
    left: 4px;
    bottom: 3px;
    width: 7px;
    height: 3px;
    background: #fff;
  }
  .wmax {
    width: 12px;
    height: 10px;
    border: 1px solid #fff;
    border-top-width: 3px;
    box-sizing: border-box;
  }

  .menu {
    position: relative;
    flex: none;
    height: 26px;
    display: flex;
    align-items: center;
    background: #ece9d8;
    white-space: nowrap;
  }
  .mi {
    flex: none;
    position: relative;
    top: -1px;
  }
  .helmet {
    position: absolute;
    left: 664px;
    top: 5px;
    width: 16px;
    height: 16px;
  }
  .login {
    position: absolute;
    left: 938px;
    top: 2px;
    height: 23px;
    padding: 0 5px;
    line-height: 21px;
    background: #f4f3ea;
  }

  /* 工具栏 */
  .tb {
    display: flex;
    align-items: center;
    white-space: nowrap;
    background: linear-gradient(#fbfaf5, #f1efe3);
    flex: none;
  }
  .sp,
  .it {
    flex: none;
  }
  .it {
    display: flex;
    align-items: center;
    height: 100%;
    box-sizing: border-box;
    overflow: visible;
  }
  .it > span {
    position: relative;
    top: -1px;
  }
  .pad {
    flex: none;
    display: block;
  }
  .ic {
    width: 16px;
    height: 16px;
    flex: none;
  }
  .ic.wide {
    height: 12px;
    margin-right: 2px;
  }
  .off {
    color: #a9a79b;
  }
  .on {
    background: #d4dff0;
    border: 1px solid #3f6aa8;
    box-sizing: border-box;
  }
  .more {
    font: bold 12px 'Liberation Sans', sans-serif;
    align-items: flex-start;
    padding-top: 2px;
    padding-left: 1px;
  }
  .grip {
    display: block;
    width: 2px;
    height: 16px;
    background: repeating-linear-gradient(#aaa69a 0 2px, transparent 2px 4px);
  }
  .sep {
    display: block;
    width: 1px;
    height: 17px;
    background: #c5c2b4;
  }
  .tri {
    display: inline-block;
    width: 0;
    height: 0;
    border: 3px solid transparent;
    border-top: 3.5px solid #222;
    border-bottom: 0;
    margin-left: 2px;
  }
  .tri.gray {
    border-top-color: #999;
  }
  .combo {
    position: relative;
    width: calc(100% - 3px);
    height: 22px;
    line-height: 19px;
    padding-left: 3px;
    box-sizing: border-box;
    background: #fff;
  }
  .cbtn {
    position: absolute;
    right: 0;
    top: 1px;
    bottom: 0;
    width: 11px;
    background: #f1efe3;
    display: flex;
    align-items: center;
    justify-content: center;
  }
  .cbtn .tri {
    margin: 0;
  }
  .two-d {
    background: #fff;
    padding-left: 4px;
    gap: 2px;
  }
  .xlab {
    color: #aaa;
    font-family: 'Liberation Mono', monospace;
    padding-left: 3px;
  }
  .spin {
    position: relative;
    box-sizing: border-box;
    width: 58px;
    height: 20px;
    line-height: 18px;
    border: 1px solid #ccc;
    background: #f6f5ee;
    color: #aaa;
    text-align: right;
    padding-right: 17px;
    font-family: 'Liberation Mono', monospace;
  }
  .spin b {
    position: absolute;
    right: 2px;
    top: 0;
    font-size: 8px;
    line-height: 8px;
    color: #999;
  }
  .top1 {
    height: 27px;
  }
  .ra {
    height: 24px;
    margin-top: 1px;
  }
  .rb {
    height: 24px;
    margin-top: 2px;
  }
  .rc {
    height: 23px;
    margin-top: 3px;
  }
  .rd {
    height: 26px;
    margin-top: 1px;
  }
  .re {
    height: 22px;
    background: linear-gradient(#f6f5ee, #f1efe3);
  }

  .body {
    flex: 1;
    min-height: 0;
    display: flex;
    background: #ece9d8;
  }

  /* 左边窄栏 */
  .strip {
    width: 17px;
    flex: none;
    margin-right: 1px;
    display: flex;
    flex-direction: column;
    border-right: 1px solid #7d8a96;
    box-sizing: border-box;
  }
  .shead {
    height: 17px;
    background: #2f6fce;
    display: flex;
    align-items: center;
    justify-content: center;
  }
  .scell {
    height: 22px;
    flex: none;
    box-sizing: border-box;
    border-bottom: 1px solid #b9b5a4;
    background: #ece9d8;
  }
  .swhite {
    flex: 1;
    background: #fff;
    border-bottom: 1px solid #7d8a96;
  }
  .scell.low {
    height: 23px;
    border-top: 1px solid #fff;
  }

  /* 左侧面板 */
  .left {
    width: 315px;
    flex: none;
    box-sizing: border-box;
    padding: 1px 4px 0 5px;
    display: flex;
    flex-direction: column;
  }
  .phead {
    height: 15px;
    box-sizing: border-box;
    flex: none;
    display: flex;
    align-items: center;
    gap: 10px;
    border: 1px solid #8d8d7f;
    border-radius: 3px;
    background: linear-gradient(#ece9d8, #e2dfcc);
    line-height: 13px;
    padding-right: 5px;
    font-size: 13px;
  }
  .phead span {
    flex: 1;
    position: relative;
    top: -1px;
  }
  .pin {
    width: 9px;
    height: 10px;
  }
  .thinbar {
    height: 3px;
    margin-top: 1px;
    border: 1px solid #9fb0c0;
    background: #f4f3ea;
  }
  .group {
    margin-top: 5px;
    width: 305px;
    height: 325px;
    box-sizing: border-box;
    border: 1px solid #d8d5c4;
    border-bottom-color: #fff;
    background: #ece9d8;
    display: flex;
    flex-direction: column;
  }
  .inner {
    height: 22px;
    margin-top: 2px;
    background: linear-gradient(#f3f1e6, #ece9d8);
  }
  .inforow {
    height: 22px;
    margin-top: 3px;
    display: flex;
    align-items: center;
    padding-left: 4px;
  }
  .dis {
    margin-left: 7px;
    color: #a9a79b;
  }
  .discombo {
    margin-left: 3px;
    width: 133px;
    height: 20px;
    box-sizing: border-box;
    border: 1px solid #b6b4a7;
    background: #ece9d8;
    display: flex;
    align-items: center;
    justify-content: flex-end;
    padding-right: 4px;
  }
  .sect {
    display: block;
    width: 298px;
    height: 269px;
    margin: 2px 0 0 4px;
    box-sizing: border-box;
    background: #000;
    border: 2px solid #e01010;
    outline: 1px solid #fff;
  }
  .ct {
    font: 36px 'Noto Sans CJK SC', sans-serif;
    fill: #fff;
  }
  .ct.dim {
    fill: #555;
  }
  .ct.grn {
    font-family: 'Liberation Mono', monospace;
    font-size: 34px;
    letter-spacing: -2.400px;
    fill: #2fe02f;
  }
  .status {
    display: flex;
    gap: 2px;
    margin-top: 4px;
    height: 21px;
    flex: none;
  }
  .cell {
    box-sizing: border-box;
    border: 1px solid #d8d5c4;
    background: #ece9d8;
    line-height: 18px;
  }
  .cell.a {
    width: 148px;
    padding-left: 9px;
  }
  .cell.b {
    width: 156px;
  }
  .left > .phead:nth-of-type(n) {
    width: 306px;
  }
  .status + .phead {
    margin-top: 4px;
  }
  .newbar {
    margin-top: 2px;
    height: 22px;
    flex: none;
    display: flex;
    align-items: center;
    padding-left: 5px;
    background: linear-gradient(#f6f5ee, #ece9d8);
  }
  .new {
    margin-left: 3px;
    position: relative;
    top: -1px;
  }
  .xx {
    width: 14px;
    height: 14px;
    margin: 0 8px 0 8px;
  }
  .search {
    display: flex;
    height: 24px;
    margin-top: 4px;
    flex: none;
    width: 306px;
  }
  .sinput {
    width: 281px;
    margin-left: 1px;
    box-sizing: border-box;
    border: 1px solid #a9b4c0;
    border-bottom-width: 2px;
    background: #fff;
    color: #888;
    line-height: 20px;
    padding-left: 2px;
  }
  .sbtn {
    flex: 1;
    display: flex;
    align-items: center;
    justify-content: center;
    background: linear-gradient(#f0efe6, #dfe6ea);
  }
  .tree {
    flex: 1;
    margin-top: 1px;
    width: 306px;
    box-sizing: border-box;
    background: #fff;
    border: 1px solid #a0acb8;
    border-bottom: 0;
    padding-top: 0;
  }
  .troot {
    display: flex;
    align-items: center;
    height: 17px;
    margin-top: 0;
    padding-left: 8px;
  }
  .minus {
    position: relative;
    width: 9px;
    height: 9px;
    border: 1px solid #888;
    background: linear-gradient(#fff, #ddd);
    box-sizing: border-box;
    margin-right: 7px;
  }
  .minus::after {
    content: '';
    position: absolute;
    left: 1px;
    right: 1px;
    top: 3px;
    height: 1px;
    background: #111;
  }
  .funnel {
    width: 14px;
    height: 16px;
    margin-right: 6px;
  }
  .tlist {
    position: relative;
    padding-left: 44px;
    margin-top: 1px;
  }
  .tlist::before {
    content: '';
    position: absolute;
    left: 31px;
    top: -1px;
    bottom: 8px;
    border-left: 1px dotted #999;
  }
  .tnode {
    position: relative;
    display: flex;
    align-items: center;
    height: 16px;
  }
  .tnode::before {
    content: '';
    position: absolute;
    left: -12px;
    width: 12px;
    top: 8px;
    border-top: 1px dotted #999;
  }
  .gear {
    width: 12px;
    height: 12px;
    margin-right: 5px;
  }
  .tname {
    line-height: 16px;
    padding: 0 3px 0 1px;
  }
  .tname.cur {
    background: #2f68c4;
    color: #0c1a3a;
  }

  /* 画布 */
  .canvas {
    display: block;
    width: 642px;
    height: 431px;
    background: #000;
    margin-top: 1px;
    flex: none;
  }
  .main {
    flex: none;
    width: 642px;
    display: flex;
    flex-direction: column;
    min-height: 0;
  }
  .axis {
    font: 12px 'Liberation Sans', sans-serif;
  }
  .axis.y {
    fill: #10d010;
  }
  .axis.x {
    fill: #c01010;
  }
  .five {
    font: 15px 'Liberation Sans', sans-serif;
    fill: #ddd;
    text-anchor: middle;
  }

  /* 下方表格 */
  .lower {
    flex: 1;
    min-height: 0;
    display: flex;
    background: #f1efe3;
  }
  .gutter {
    width: 13px;
    flex: none;
    position: relative;
    background: #ece9d8;
  }
  .redx {
    position: absolute;
    left: 2px;
    top: 4px;
    width: 8px;
    height: 8px;
    line-height: 8px;
    text-align: center;
    font: bold 9px/8px 'Liberation Sans', sans-serif;
    background: #d8503a;
    color: #fff;
    border-radius: 2px;
  }
  .dotline {
    position: absolute;
    left: 6px;
    top: 14px;
    bottom: 0;
    border-left: 2px dotted #c5c2b0;
  }
  .lowerbody {
    flex: 1;
    min-width: 0;
    display: flex;
    flex-direction: column;
    padding-top: 4px;
  }
  .gridwrap {
    margin-top: 2px;
    display: flex;
    height: 155px;
    flex: none;
    border-top: 1px solid #a8b8c8;
    box-sizing: border-box;
  }
  .gridclip {
    width: 610px;
    height: 154px;
    overflow: hidden;
    flex: none;
    background: #c8fbd2;
  }
  table {
    border-collapse: collapse;
    table-layout: fixed;
    width: 610px;
  }
  th {
    height: 20px;
    padding: 0;
    font-weight: normal;
    background: linear-gradient(#f8f7f0, #ece9d8);
    border-right: 1px solid #c4c2b3;
  }
  th.hot {
    background: linear-gradient(#fbdca0, #f6bd66);
    color: #8a1c10;
  }
  td {
    padding: 0 0 0 2px;
    border-right: 1px solid #9fc0a8;
    border-bottom: 1px solid #9fc0a8;
    background: #c8fbd2;
    white-space: nowrap;
    overflow: hidden;
  }
  td.num {
    background: linear-gradient(90deg, #f5f4ec, #ece9d8);
    text-align: center;
    padding: 0;
    font-family: 'Liberation Mono', monospace;
    border-color: #c4c2b3;
  }
  td.cursel {
    background: #fbc880;
    color: #a0201a;
  }
  td.nm {
    border-right: 1px solid #111;
  }
  td.focus {
    background: #b2e4d4;
    outline: 1px dotted #111;
    outline-offset: -1px;
  }
  td.ctr {
    text-align: center;
    padding: 0;
  }
  .hrb {
    font: 12px 'Liberation Sans', sans-serif;
    border-bottom: 1px solid #111;
  }
  td.shape {
    padding: 0;
    line-height: 0;
    vertical-align: top;
  }
  td.fx {
    white-space: normal;
    word-spacing: 1000px;
    line-height: 16px;
  }
  td.ex {
    vertical-align: top;
    padding: 0;
    border: 0;
  }
  .sn {
    font: 12px 'Liberation Mono', monospace;
    letter-spacing: -1.2px;
    fill: #111;
  }
  .sn.red {
    fill: #d02020;
  }
  .sn.mg {
    fill: #e000e0;
  }
  .vscroll {
    width: 16px;
    flex: none;
    background: #f3f4ef;
    display: flex;
    flex-direction: column;
    align-items: center;
    justify-content: space-between;
    padding: 3px 0 2px;
    box-sizing: border-box;
    position: relative;
  }
  .sb {
    width: 14px;
    height: 14px;
    flex: none;
    border-radius: 2px;
    background: linear-gradient(135deg, #e4ecfd, #b8ccf4);
    border: 1px solid #a8bce8;
    box-sizing: border-box;
    display: flex;
    align-items: center;
    justify-content: center;
  }
  .vthumb {
    position: absolute;
    top: 47px;
    left: 1px;
    width: 14px;
    height: 31px;
    box-sizing: border-box;
    border: 1px solid #9fb4e0;
    border-radius: 2px;
    background: linear-gradient(90deg, #c8d8fa, #b8ccf4);
  }
  .hscroll {
    height: 17px;
    flex: none;
    width: 607px;
    display: flex;
    align-items: center;
    padding-left: 2px;
    gap: 2px;
    background: #f3f4ef;
    box-sizing: border-box;
  }
  .hthumb {
    width: 125px;
    height: 14px;
    box-sizing: border-box;
    border: 1px solid #9fb4e0;
    border-radius: 2px;
    background: linear-gradient(#d0defb, #b8ccf4);
    margin-right: 452px;
  }

  /* 右边浏览器 */
  .browser {
    flex: 1;
    min-width: 0;
    display: flex;
    flex-direction: column;
    background: #f0f0f0;
    color: #444;
    font-size: 12px;
  }
  .photo {
    height: 4px;
    flex: none;
    background: linear-gradient(90deg, #1d3320, #2a4a3a 30%, #141f1a 60%, #332a1a);
  }
  .bmenu {
    height: 29px;
    flex: none;
    display: flex;
    align-items: flex-start;
    box-sizing: border-box;
    padding: 2px 0 0 131px;
    gap: 17px;
    white-space: nowrap;
    position: relative;
    border-bottom: 1px solid #ccc;
  }
  .chev {
    position: absolute;
    left: 115px;
    top: -2px;
    font: 20px 'Liberation Sans', sans-serif;
    color: #999;
  }
  .skin {
    position: absolute;
    left: 330px;
    top: 0;
    width: 30px;
    height: 20px;
    box-sizing: border-box;
    border: 1px solid #bbb;
    border-top: 0;
    border-radius: 0 0 3px 3px;
    display: flex;
    align-items: center;
    justify-content: center;
  }
  .dash {
    position: absolute;
    left: 366px;
    top: 2px;
  }
  .addr {
    position: relative;
    height: 28px;
    flex: none;
    display: flex;
    align-items: center;
    background: #fff;
    box-sizing: border-box;
    border-bottom: 1px solid #c8c8c8;
  }
  .addr > * {
    flex: none;
  }
  .url {
    font: 15px 'Lato', 'Liberation Sans', sans-serif;
    color: #222;
    width: 233px;
  }
  .url em {
    font-style: normal;
    color: #9a9a9a;
  }
  .qr {
    width: 13px;
    height: 13px;
  }
  .bolt {
    width: 12px;
    height: 14px;
    margin-left: 8px;
  }
  .vsep {
    width: 1px;
    height: 27px;
    background: #ddd;
    margin: 0 7px;
  }
  .vee {
    width: 11px;
    height: 7px;
  }
  .vee + .vsep {
    margin-right: 4px;
  }
  .paw {
    width: 17px;
    height: 16px;
  }
  .pawtri {
    margin-left: 1px;
    align-self: flex-end;
    margin-bottom: 6px;
  }
  .hint {
    margin-left: 3px;
    font-size: 15px;
    color: #9a9a9a;
    white-space: nowrap;
  }
  .btools {
    height: 36px;
    flex: none;
    display: flex;
    align-items: center;
    padding-left: 15px;
    white-space: nowrap;
  }
  .bgrip {
    width: 3px;
    height: 14px;
    margin-right: 13px;
    background: repeating-linear-gradient(#bbb 0 3px, transparent 3px 6px);
    flex: none;
  }
  .bt {
    flex: none;
    display: flex;
    align-items: center;
    font-size: 12.500px;
    color: #333;
  }
  .btl {
    margin: 0 11px 0 2px;
  }
  .tabs {
    position: relative;
    height: 29px;
    flex: none;
    display: flex;
    align-items: flex-end;
    background: #f0f0f0;
    border-bottom: 1px solid #c2c2c2;
    box-sizing: border-box;
    white-space: nowrap;
  }
  .tab {
    box-sizing: border-box;
    width: 164px;
    height: 28px;
    flex: none;
    display: flex;
    align-items: center;
    background: #ececec;
    border: 1px solid #c8c8c8;
    border-left: 0;
    border-bottom: 0;
    border-radius: 0 3px 0 0;
    overflow: hidden;
  }
  .tabt {
    flex: 1;
    overflow: hidden;
    color: #666;
    font-size: 12.500px;
  }
  .tabt.dark {
    margin-left: 5px;
    color: #333;
  }
  .tabx {
    flex: none;
    width: 20px;
    font: 17px 'Liberation Sans', sans-serif;
    color: #999;
  }
  .tab.act {
    width: 195px;
    margin-bottom: -1px;
    padding-left: 11px;
    background: #fff;
    border-left: 1px solid #c8c8c8;
    border-radius: 3px 3px 0 0;
  }
  .plus {
    margin-left: 5px;
    font: bold 19px/27px 'Liberation Sans', sans-serif;
    color: #777;
  }
  .content {
    flex: 1;
    min-height: 0;
    background: #fff;
    overflow: hidden;
    display: flex;
    flex-direction: column;
  }
  .cliprow {
    display: flex;
    align-items: flex-start;
    height: 29px;
    margin: -11px 0 0 -2px;
    flex: none;
    box-sizing: border-box;
    border-bottom: 1px dotted #bbb;
    white-space: nowrap;
    padding-left: 1px;
    line-height: 18px;
  }
  .qrow {
    display: flex;
    align-items: center;
    height: 34px;
    margin-left: -6px;
    padding-top: 1px;
    box-sizing: border-box;
    border-bottom: 1px solid #ddd;
    flex: none;
    white-space: nowrap;
  }
  .bluel,
  .qt {
    color: #0000c8;
    font-size: 14px;
  }
  .coin {
    width: 10px;
    height: 10px;
    margin: 0 6px 0 9px;
    border-radius: 3px;
    background: repeating-linear-gradient(#e8b020 0 2px, #f8e070 2px 3px);
    flex: none;
  }
  .cliprow .coin {
    margin-top: 4px;
  }
  .oj {
    color: #d87a30;
    font-size: 13px;
    margin-right: 9px;
  }
  .tagl {
    color: #222;
    font-size: 12px;
  }
  .meta {
    margin: 9px 0 0 -4px;
    height: 17px;
    flex: none;
    line-height: 17px;
    color: #a0a0a0;
    white-space: nowrap;
  }
  .who {
    color: #243a90;
    margin-left: -4px;
  }
  .bar {
    margin: 0 14px;
    color: #999;
  }
  .qtext {
    margin: 11px 0 0 -1px;
    height: 20px;
    flex: none;
    line-height: 20px;
    color: #111;
    font-size: 14px;
    white-space: nowrap;
  }
  .cad {
    display: block;
    width: 374px;
    height: 466px;
    margin-top: 41px;
    flex: none;
    background: #000;
  }
  .cad path,
  .cad rect,
  .cad circle {
    vector-effect: non-scaling-stroke;
  }
  .cadt text {
    font: 300 58px 'Lato', 'Noto Sans CJK SC', sans-serif;
    fill: #f2f2f2;
  }
  .under {
    height: 21px;
    flex: none;
    display: flex;
    overflow: hidden;
  }
  .uleft {
    width: 293px;
    flex: none;
    border-right: 1px solid #d4d0b8;
  }
  .uright {
    flex: 1;
    font-size: 12px;
    line-height: 13px;
    padding-left: 10px;
    white-space: nowrap;
    margin-top: -3px;
    color: #444;
  }
  .uright span {
    margin-left: 45px;
  }
  .insert {
    height: 26px;
    flex: none;
    box-sizing: border-box;
    background: #e8f1fb;
    border-top: 1px solid #c6d6e8;
    border-bottom: 1px solid #c6d6e8;
    display: flex;
    align-items: center;
    gap: 6px;
    color: #333;
  }
  .insic {
    width: 7px;
    height: 10px;
    background: #3a8ad8;
    flex: none;
  }
  .tip {
    height: 24px;
    flex: none;
    line-height: 28px;
    color: #aaa;
    white-space: nowrap;
    font-size: 12px;
  }
  .tipline {
    width: 244px;
    height: 1px;
    flex: none;
    background: #b8cce4;
  }
  .overlay {
    position: absolute;
    left: 0;
    top: 0;
    width: 1353px;
    height: 817px;
    pointer-events: none;
  }
</style>
